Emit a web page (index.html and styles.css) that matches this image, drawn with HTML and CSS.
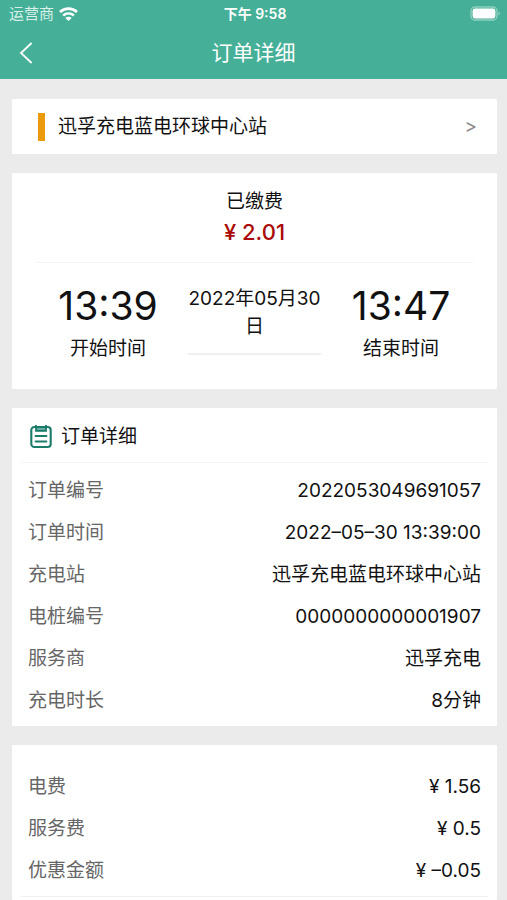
FILE: index.html
```
<!DOCTYPE html>
<html lang="zh-CN">
<head>
  <meta charset="UTF-8" />
  <meta name="viewport" content="width=device-width, initial-scale=1.0" />
  <title>订单详细</title>
  <link rel="stylesheet" href="styles.css">
</head>
<body>
  <header class="header">
    <div class="status-bar">
      <div class="carrier">
        <span>运营商</span>
        <svg class="wifi" viewBox="0 0 19 14" fill="none">
          <path d="M1 5C6 .6 13 .6 18 5" stroke="#fff" stroke-width="2.7"/>
          <path d="M4.1 8.6c3.2-2.8 7.6-2.8 10.8 0" stroke="#fff" stroke-width="2.6"/>
          <path d="M9.5 14 6.3 10.9c1.9-1.5 4.5-1.5 6.4 0z" fill="#fff"/>
        </svg>
      </div>
      <div class="clock">下午 9:58</div>
      <div class="battery">
        <svg viewBox="0 0 31 15" fill="none">
          <rect x="1" y="1" width="26" height="13" rx="4" stroke="#fff" stroke-opacity=".4" stroke-width="1.4"/>
          <rect x="2.6" y="2.6" width="22.8" height="9.8" rx="2.4" fill="#fff"/>
          <path d="M28.6 5.4c1.6.7 1.6 3.5 0 4.2z" fill="#fff" fill-opacity=".5"/>
        </svg>
      </div>
    </div>
    <nav class="nav">
      <button class="back" type="button" aria-label="返回">
        <svg viewBox="0 0 14 22" fill="none">
          <path d="M12.6 1 2 11l10.6 10" stroke="#fff" stroke-width="1.8"/>
        </svg>
      </button>
      <h1 class="nav-title">订单详细</h1>
    </nav>
  </header>

  <main class="content">
    <a class="card station" href="#">
      <span class="station-name">迅孚充电蓝电环球中心站</span>
      <span class="arrow">&gt;</span>
    </a>

    <section class="card summary">
      <div class="paid">
        <div>已缴费</div>
        <div class="amount">¥ 2.01</div>
      </div>
      <div class="period">
        <div class="time">
          <div class="hour">13:39</div>
          <div>开始时间</div>
        </div>
        <div class="date">2022年05月30日</div>
        <div class="time">
          <div class="hour">13:47</div>
          <div>结束时间</div>
        </div>
      </div>
    </section>

    <section class="card detail">
      <h2 class="card-title">
        <svg class="clipboard" viewBox="0 0 22 24" fill="none" stroke="#1c7c6c">
          <path d="M6 2h10v4.2H6z" fill="#69aca1" stroke="none"/>
          <rect x="1.3" y="2" width="19.4" height="20" rx="3" stroke-width="2.1"/>
          <path d="M6 0v5.8h10V0" stroke-width="1.8"/>
          <path d="M5.6 11h10.8M5.6 16.4h10.8" stroke-width="2" stroke-linecap="round"/>
        </svg>
        订单详细
      </h2>
      <dl class="rows">
        <div class="row"><dt>订单编号</dt><dd>2022053049691057</dd></div>
        <div class="row"><dt>订单时间</dt><dd>2022–05–30 13:39:00</dd></div>
        <div class="row"><dt>充电站</dt><dd>迅孚充电蓝电环球中心站</dd></div>
        <div class="row"><dt>电桩编号</dt><dd>0000000000001907</dd></div>
        <div class="row"><dt>服务商</dt><dd>迅孚充电</dd></div>
        <div class="row"><dt>充电时长</dt><dd>8分钟</dd></div>
      </dl>
    </section>

    <section class="card fees">
      <dl class="rows">
        <div class="row"><dt>电费</dt><dd>¥ 1.56</dd></div>
        <div class="row"><dt>服务费</dt><dd>¥ 0.5</dd></div>
        <div class="row"><dt>优惠金额</dt><dd>¥ –0.05</dd></div>
      </dl>
    </section>
  </main>
</body>
</html>
```
FILE: styles.css
```
*,
*::before,
*::after {
  box-sizing: border-box;
}

body {
  margin: 0;
  min-height: 100vh;
  display: flex;
  flex-direction: column;
  background: #ebebeb;
  color: #111;
  font-family: Inter, "Noto Sans CJK SC", sans-serif;
  font-size: 19px;
  line-height: 28px;
}

h1, h2, dl, dd {
  margin: 0;
  font-size: inherit;
  font-weight: normal;
}

/* header */

.header {
  flex: none;
  background: #45b097;
  color: #fff;
}

.status-bar {
  display: grid;
  grid-template-columns: 1fr auto 1fr;
  align-items: center;
  height: 27px;
  padding: 0 6px 0 9px;
  font-size: 14px;
  line-height: 27px;
}

.carrier {
  display: flex;
  align-items: center;
  gap: 5px;
  color: #d9f0ea;
  font-size: 15px;
}

.wifi {
  width: 19px;
  height: 14px;
}

.clock {
  font-weight: 600;
}

.battery {
  display: flex;
  justify-content: flex-end;
}

.battery svg {
  width: 31px;
  height: 15px;
}

.nav {
  display: grid;
  grid-template-columns: 1fr auto 1fr;
  align-items: center;
  height: 52px;
  padding: 0 19px;
}

.back {
  display: flex;
  justify-self: start;
  padding: 0;
  border: 0;
  background: none;
}

.back svg {
  width: 14px;
  height: 22px;
}

.nav-title {
  font-size: 21px;
}

/* cards */

.content {
  flex: 1;
  display: flex;
  flex-direction: column;
  gap: 19px;
  padding: 20px 10px 0 12px;
}

.card {
  flex: none;
  background: #fff;
  border-radius: 1px;
}

.station {
  display: flex;
  align-items: center;
  justify-content: space-between;
  padding: 14px 20px 13px 26px;
  color: inherit;
  text-decoration: none;
}

.station-name {
  padding-left: 13px;
  border-left: 7px solid #eb9a0c;
}

.arrow {
  color: #888;
}

.summary {
  padding: 15px 24px 26px;
  text-align: center;
}

.paid {
  padding-bottom: 14px;
  border-bottom: 1px solid #f4f4f4;
}

.amount {
  color: #aa0a0a;
  font-size: 22px;
  font-weight: 500;
  line-height: 32px;
}

.period {
  display: grid;
  grid-template-columns: 1fr 133px 1fr;
  column-gap: 8px;
  align-items: start;
  padding-top: 22px;
}

.hour {
  font-size: 39px;
  line-height: 42px;
  padding-bottom: 8px;
}

.date {
  padding-bottom: 12px;
  border-bottom: 2px solid #f0f0f0;
}

.detail {
  padding: 0 9px 4px;
}

.card-title {
  display: flex;
  align-items: center;
  gap: 9px;
  height: 55px;
  padding: 3px 0 0 9px;
  border-bottom: 1px solid #f4f4f4;
}

.clipboard {
  width: 22px;
  height: 24px;
}

.rows {
  padding: 7px 7px 0;
}

.row {
  display: flex;
  justify-content: space-between;
  padding: 7px 0;
}

.row dt {
  color: #666;
}

.fees {
  flex: 1;
  padding: 14px 9px 0;
}

.fees .rows {
  padding-bottom: 4px;
  border-bottom: 1px solid #f0f0f0;
}
```
